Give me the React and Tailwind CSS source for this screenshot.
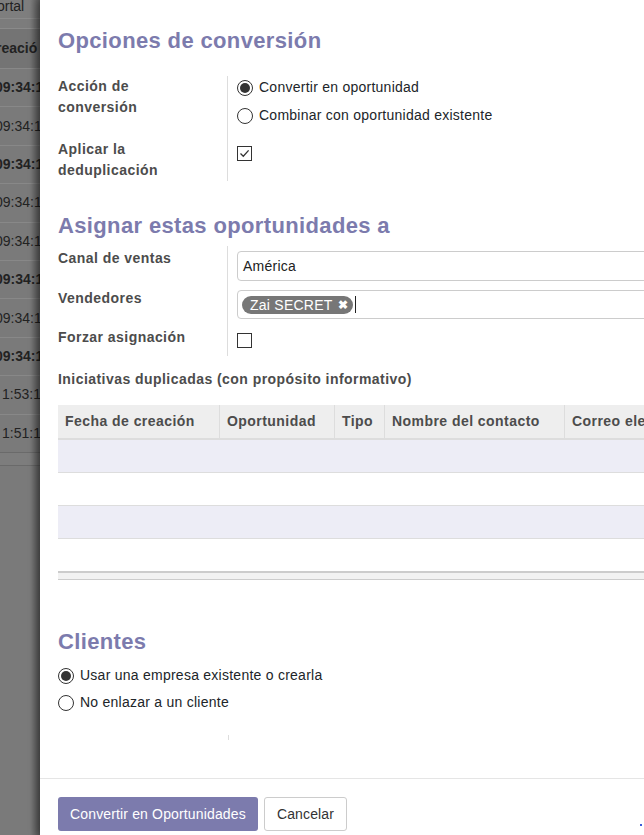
import React from 'react'

const font = { fontFamily: '"Liberation Sans", Arial, sans-serif' }

const backRows = [
  { text: '09:34:1', bold: true },
  { text: '09:34:1', bold: false },
  { text: '09:34:1', bold: true },
  { text: '09:34:1', bold: false },
  { text: '09:34:1', bold: false },
  { text: '09:34:1', bold: true },
  { text: '09:34:1', bold: false },
  { text: '09:34:1', bold: true },
  { text: '1:53:1', bold: false, pad: true },
  { text: '1:51:1', bold: false, pad: true },
]

function BackgroundList() {
  return (
    <div className="relative w-[40px] shrink-0 overflow-hidden bg-[#7a7a7a] text-[14px] text-[#222]">
      <div className="h-[18px] leading-[12px] whitespace-nowrap -ml-[3px] bg-[#7e7e7e]">ortal</div>
      <div className="h-[11px] border-y border-[#8a8a8a] bg-[#7c7c7c]" />
      <div className="h-[39px] flex items-center whitespace-nowrap -ml-[4px] font-bold bg-[#747474]">reació</div>
      {backRows.map((row, i) => (
        <div
          key={i}
          className={`h-[38.4px] flex items-center whitespace-nowrap border-t border-[#888] ${row.bold ? 'font-bold' : ''} ${row.pad ? 'pl-[2px]' : '-ml-[5px]'}`}
        >
          {row.text}
        </div>
      ))}
      <div className="h-[14px] border-y border-[#6a6a6a] bg-[#7d7d7d]" />
      {/* shadow cast by the dialog */}
      <div className="absolute right-0 top-0 bottom-0 w-[10px] bg-gradient-to-r from-transparent to-black/30" />
    </div>
  )
}

function Radio({ checked, label }) {
  return (
    <label className="flex items-center gap-[6px] leading-[21px]">
      <span className="w-[16px] h-[16px] rounded-full border border-[#333] bg-white flex items-center justify-center">
        {checked && <span className="w-[10px] h-[10px] rounded-full bg-[#333]" />}
      </span>
      <span>{label}</span>
    </label>
  )
}

function Checkbox({ checked }) {
  return (
    <span className="w-[15px] h-[15px] border border-[#333] bg-white flex items-center justify-center">
      {checked && (
        <svg width="11" height="11" viewBox="0 0 11 11" fill="none">
          <path d="M1.5 5.5 L4.3 8.3 L9.6 2.4" stroke="#333" strokeWidth="1.3" />
        </svg>
      )}
    </span>
  )
}

function SectionTitle({ children, className = '' }) {
  return (
    <h2 className={`text-[22px] leading-[30px] font-bold tracking-[0.36px] text-[#7c7bad] ${className}`}>{children}</h2>
  )
}

const columns = [
  { title: 'Fecha de creación', w: 'w-[161px]' },
  { title: 'Oportunidad', w: 'w-[115px]' },
  { title: 'Tipo', w: 'w-[50px]' },
  { title: 'Nombre del contacto', w: 'w-[180px]' },
  { title: 'Correo electrónico', w: 'w-[180px]' },
]

function DuplicatesTable() {
  return (
    <div className="mt-[15px] w-[700px]">
      <div className="flex h-[35px] bg-[#eeeeee] border-b-2 border-[#dddddd] font-bold tracking-[0.45px] text-[#4c4c4c]">
        {columns.map((c, i) => (
          <div
            key={c.title}
            className={`${c.w} shrink-0 px-[7px] flex items-center whitespace-nowrap ${i > 0 ? 'border-l border-[#dddddd]' : ''}`}
          >
            {c.title}
          </div>
        ))}
      </div>
      <div className="h-[32px] bg-[#ededf6]" />
      <div className="h-[33px] border-t border-[#dddddd] bg-white" />
      <div className="h-[33px] border-t border-[#dddddd] bg-[#ededf6]" />
      <div className="h-[33px] border-t border-[#dddddd] bg-white" />
      <div className="h-[9px] border-t-2 border-b border-[#cccccc] bg-[#f2f2f2]" />
    </div>
  )
}

const label = 'font-bold tracking-[0.45px] text-[#4c4c4c] leading-[21px] border-r border-[#dddddd]'

export default function App() {
  return (
    <div className="flex w-[644px] h-[835px] overflow-hidden bg-[#7a7a7a]" style={font}>
      <BackgroundList />

      <div className="relative flex-1 min-w-0 flex flex-col bg-white text-[14px] tracking-[0.25px] text-[#212529] shadow-[-3px_0_8px_rgba(0,0,0,0.35)]">
        <div className="flex-1 px-[18px]">
          <SectionTitle className="mt-[26px]">Opciones de conversión</SectionTitle>

          <div className="mt-[20px] grid grid-cols-[170px_1fr]">
            <div className={`${label} pb-[21px]`}>
              Acción de<br />conversión
            </div>
            <div className="pl-[9px] pt-[1px] flex flex-col gap-[7px]">
              <Radio checked label="Convertir en oportunidad" />
              <Radio label="Combinar con oportunidad existente" />
            </div>
            <div className={label}>
              Aplicar la<br />deduplicación
            </div>
            <div className="pl-[9px] pt-[7px]">
              <Checkbox checked />
            </div>
          </div>

          <SectionTitle className="mt-[30px]">Asignar estas oportunidades a</SectionTitle>

          <div className="mt-[5px] w-[700px] grid grid-cols-[170px_1fr] pt-[2px]">
            <div className={`${label} h-[42px] -mt-[2px] pt-[2px]`}>
              Canal de ventas
            </div>
            <div className="pl-[9px] pt-[3px]">
              <div className="h-[30px] border border-[#cccccc] rounded-[4px] px-[5px] flex items-center text-[#222]">
                América
              </div>
            </div>
            <div className={`${label} h-[39px]`}>
              Vendedores
            </div>
            <div className="pl-[9px] pt-[2px]">
              <div className="h-[29px] border border-[#cccccc] rounded-[4px] px-[4px] flex items-center">
                <span className="h-[18px] rounded-full bg-[#777777] text-white pl-[8px] pr-[5px] flex items-center gap-[5px] leading-none">
                  Zai SECRET
                  <span className="text-[12px] font-bold">✖</span>
                </span>
                <span className="ml-[2px] w-px h-[17px] bg-[#222]" />
              </div>
            </div>
            <div className={`${label} h-[29px]`}>
              Forzar asignación
            </div>
            <div className="pl-[9px] pt-[6px]">
              <Checkbox />
            </div>
          </div>

          <div className="mt-[13px] font-bold tracking-[0.45px] text-[#4c4c4c] leading-[21px]">
            Iniciativas duplicadas (con propósito informativo)
          </div>

          <DuplicatesTable />

          <SectionTitle className="mt-[47px]">Clientes</SectionTitle>
          <div className="mt-[8px] flex flex-col gap-[6px]">
            <Radio checked label="Usar una empresa existente o crearla" />
            <Radio label="No enlazar a un cliente" />
          </div>
          <div className="mt-[22px] ml-[170px] h-[5px] border-l border-[#dddddd]" />
        </div>

        <div className="h-[57px] border-t border-[#e5e5e5] px-[18px] pt-[18px] flex gap-[6px] shrink-0 tracking-[0.15px]">
          <button className="h-[34px] px-[12px] rounded-[3px] bg-[#7c7bad] text-white text-[14px]">
            Convertir en Oportunidades
          </button>
          <button className="h-[34px] px-[12px] rounded-[3px] border border-[#cccccc] bg-white text-[#333] text-[14px]">
            Cancelar
          </button>
        </div>
        <span className="absolute right-[2px] bottom-[9px] w-[2px] h-[2px] bg-[#3b5bdb]" />
      </div>
    </div>
  )
}
